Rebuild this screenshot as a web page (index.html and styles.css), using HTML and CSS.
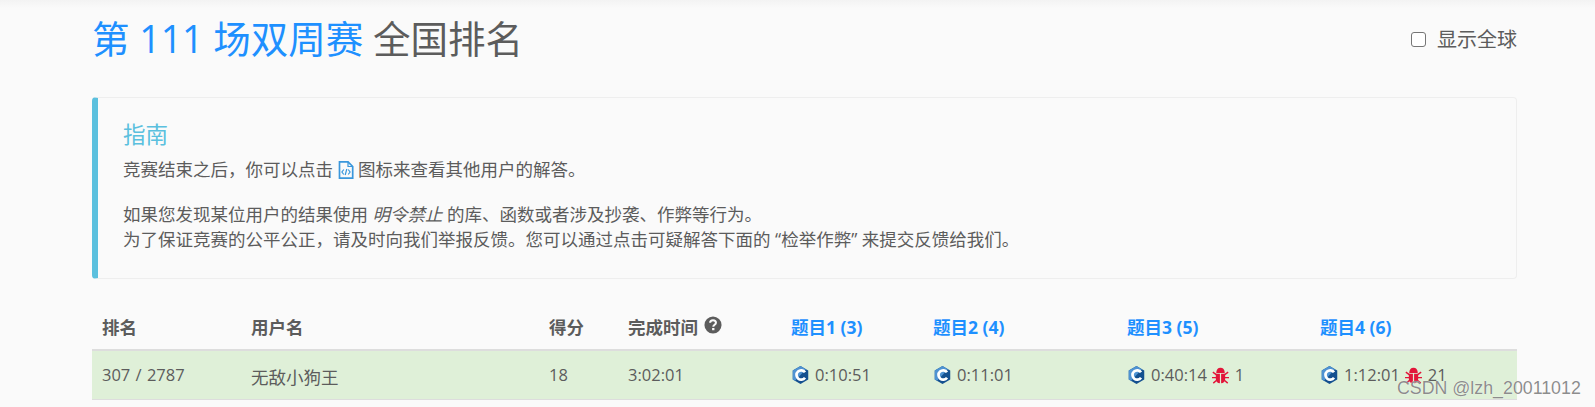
FILE: index.html
```html
<!DOCTYPE html>
<html lang="zh-CN">

<head>
    <meta charset="UTF-8">
    <title>第 111 场双周赛 全国排名</title>
    <link rel="stylesheet" href="styles.css">
</head>

<body>
    <svg class="defs">
        <defs>
            <symbol id="cpp" viewBox="0 0 18 20">
                <path d="M9 0L17.600 5V15L9 20L.4 15V5Z" fill="#14508f" />
                <path d="M9 0L.4 5V15L3 16.500L15 3.500Z" fill="#4f93d2" />
                <path d="M14 7A5.200 5.200 0 1 0 14 13" fill="none" stroke="#fff" stroke-width="3" />
            </symbol>
            <symbol id="bug" viewBox="0 0 20 20">
                <path d="M5 7C5 3.200 7 1 10 1S15 3.200 15 7Z" fill="#e2163a" />
                <path d="M4.500 8H9.300V19C6.300 19 4.500 17 4.500 14ZM10.700 8H15.500V14C15.500 17 13.700 19 10.700 19Z" fill="#e2163a" />
                <path d="M5 9L1 6M5 12.500H0M5.500 15.500L1.500 19M15 9L19 6M15 12.500H20M14.500 15.500L18.500 19" stroke="#e2163a" stroke-width="1.700" fill="none" />
            </symbol>
        </defs>
    </svg>

    <div class="container">
        <div class="page-header">
            <h1><span class="contest-name">第 111 场双周赛</span> 全国排名</h1>
            <label class="show-global"><span class="checkbox"></span>显示全球</label>
        </div>

        <div class="callout">
            <h4>指南</h4>
            <p>竞赛结束之后，你可以点击
                <svg class="file-icon" viewBox="0 0 16 18">
                    <path d="M1.500 .8H10L14.700 5.500V17.200H1.500Z" fill="none" stroke="#3a97dc" stroke-width="1.700" />
                    <path d="M10 .8V5.500H14.700" fill="none" stroke="#3a97dc" stroke-width="1.200" />
                    <path d="M5.800 8.500L3.900 11L5.800 13.500M10.200 8.500L12.100 11L10.200 13.500M8.800 8L7.200 14" fill="none" stroke="#3a97dc" stroke-width="1.200" />
                </svg>
                图标来查看其他用户的解答。</p>
            <p>如果您发现某位用户的结果使用 <em>明令禁止</em> 的库、函数或者涉及抄袭、作弊等行为。<br>为了保证竞赛的公平公正，请及时向我们举报反馈。您可以通过点击可疑解答下面的 “检举作弊” 来提交反馈给我们。</p>
        </div>

        <table class="ranking">
            <colgroup>
                <col class="col-rank">
                <col class="col-user">
                <col class="col-score">
                <col class="col-time">
                <col class="col-q1">
                <col class="col-q2">
                <col class="col-q3">
                <col class="col-q4">
            </colgroup>
            <thead>
                <tr>
                    <th>排名</th>
                    <th>用户名</th>
                    <th>得分</th>
                    <th>完成时间
                        <svg class="help-icon" viewBox="0 0 20 20">
                            <circle cx="10" cy="10" r="9.500" fill="#5c5c5c" />
                            <path d="M6.800 7.600C6.800 5.700 8.200 4.700 10 4.700C11.900 4.700 13.300 5.800 13.300 7.500C13.300 9.700 10.300 9.800 10.300 12" fill="none" stroke="#fafafa" stroke-width="2.200" />
                            <rect x="9" y="13.300" width="2.600" height="2.500" fill="#fafafa" />
                        </svg>
                    </th>
                    <th><a href="#">题目1 (3)</a></th>
                    <th><a href="#">题目2 (4)</a></th>
                    <th><a href="#">题目3 (5)</a></th>
                    <th><a href="#">题目4 (6)</a></th>
                </tr>
            </thead>
            <tbody>
                <tr>
                    <td class="rank">307 / 2787</td>
                    <td class="username">无敌小狗王</td>
                    <td>18</td>
                    <td>3:02:01</td>
                    <td class="solved"><svg class="lang"><use href="#cpp" /></svg>0:10:51</td>
                    <td class="solved"><svg class="lang"><use href="#cpp" /></svg>0:11:01</td>
                    <td class="solved"><svg class="lang"><use href="#cpp" /></svg>0:40:14<svg class="bug"><use href="#bug" /></svg>1</td>
                    <td class="solved"><svg class="lang"><use href="#cpp" /></svg>1:12:01<svg class="bug"><use href="#bug" /></svg>21</td>
                </tr>
            </tbody>
        </table>
    </div>

    <div class="watermark">CSDN @lzh_20011012</div>
</body>

</html>
```

FILE: styles.css
```css
* {
    box-sizing: border-box;
}

html,
body {
    margin: 0;
    padding: 0;
    height: 407px;
    overflow: hidden;
}

body {
    background-color: #fafafa;
    background-image: linear-gradient(#f3f3f3, #fafafa 8px);
    color: #5c5c5c;
    font-family: "Open Sans", "Noto Sans CJK SC", sans-serif;
    font-size: 17.5px;
    line-height: 25px;
}

.defs {
    display: none;
}

.container {
    width: 1425px;
    margin-left: 92px;
}

.page-header {
    display: flex;
    justify-content: space-between;
    height: 97px;
    padding-top: 14px;
}

.page-header h1 {
    margin: 0;
    font-size: 37.500px;
    font-weight: 400;
    line-height: 50px;
}

.contest-name {
    color: #1e90ff;
}

.show-global {
    display: flex;
    align-items: center;
    height: 50px;
    font-size: 20px;
}

.checkbox {
    width: 15px;
    height: 15px;
    margin-right: 11px;
    background-color: #fff;
    border: 1.500px solid #767676;
    border-radius: 3px;
}

.callout {
    height: 182px;
    padding: 23px 25px 0 25px;
    border: 1px solid #eeeeee;
    border-left: 6px solid #5bc0de;
    border-radius: 4px;
}

.callout h4 {
    margin: 0 0 8px 0;
    color: #5bc0de;
    font-size: 22.5px;
    font-weight: 400;
    line-height: 28px;
}

.callout p {
    margin: 0 0 20px 0;
}

.callout em {
    font-style: italic;
}

.file-icon {
    width: 16px;
    height: 18px;
    vertical-align: -3px;
}

.ranking {
    width: 100%;
    margin-top: 30px;
    border-collapse: collapse;
    table-layout: fixed;
}

.col-rank { width: 149px; }
.col-user { width: 298px; }
.col-score { width: 79px; }
.col-time { width: 163px; }
.col-q1 { width: 142px; }
.col-q2 { width: 194px; }
.col-q3 { width: 193px; }

.ranking th {
    height: 41px;
    padding: 0 10px 4px 10px;
    border-bottom: 2px solid #dddddd;
    font-weight: 700;
    text-align: left;
}

.ranking th a {
    color: #1e90ff;
    text-decoration: none;
}

.help-icon {
    width: 18px;
    height: 18px;
    margin-left: 1px;
    vertical-align: 0;
}

.ranking td {
    height: 49px;
    padding: 0 10px;
    background-color: #dff0d8;
    border-bottom: 1px solid #dddddd;
    font-size: 16.5px;
    white-space: nowrap;
}

.ranking .rank {
    word-spacing: 1px;
}

.ranking .username {
    padding-top: 5px;
    font-size: 17.5px;
}

.ranking .solved {
    padding-left: 11px;
}

.lang {
    width: 17px;
    height: 18px;
    margin-right: 6px;
    vertical-align: -3px;
}

.bug {
    width: 17px;
    height: 17px;
    margin: 0 6px 0 5px;
    vertical-align: -3px;
}

.watermark {
    position: absolute;
    top: 378px;
    left: 1397px;
    color: rgba(120, 120, 120, 0.85);
    font-family: "Liberation Sans", sans-serif;
    font-size: 17.8px;
    line-height: 20px;
    text-shadow: 0 0 1px #fff;
}
```
